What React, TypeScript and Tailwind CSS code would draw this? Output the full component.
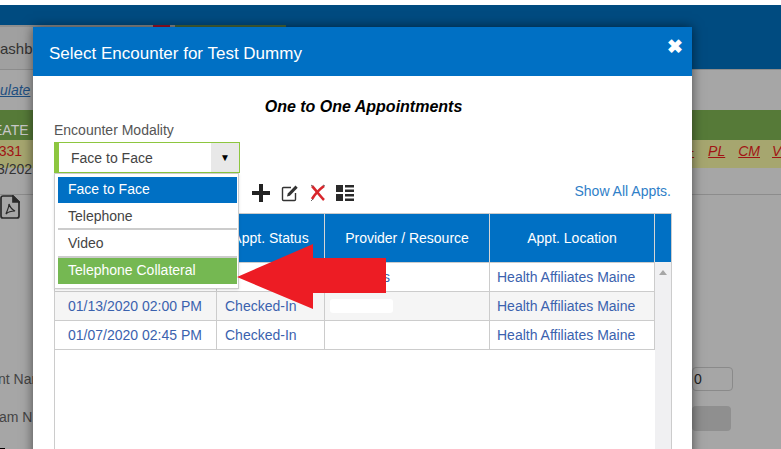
import React from "react";

const rows = [
  { date: "", status: "", provider: "s" },
  { date: "01/13/2020 02:00 PM", status: "Checked-In", provider: "" },
  { date: "01/07/2020 02:45 PM", status: "Checked-In", provider: "" },
];

const PlusIcon = () => (
  <svg width="18" height="18" viewBox="0 0 18 18">
    <path d="M7 0h4v7h7v4h-7v7H7v-7H0V7h7z" fill="#222" />
  </svg>
);

const EditIcon = () => (
  <svg width="18" height="18" viewBox="0 0 18 18" fill="none">
    <path d="M10 3.5H2.5a1 1 0 0 0-1 1v11a1 1 0 0 0 1 1h11a1 1 0 0 0 1-1V9" stroke="#333" strokeWidth="1.4" />
    <path d="M6 12.5l.8-3L14.5 1.6l2.2 2.2-7.8 7.9z" fill="#333" />
  </svg>
);

const CrossIcon = () => (
  <svg width="16" height="18" viewBox="0 0 16 18" fill="none">
    <path d="M2 2c3 3 7 9 12 14" stroke="#d8262c" strokeWidth="2.6" />
    <path d="M14 2C10 5 5 10 2 15" stroke="#d8262c" strokeWidth="2.6" />
    <path d="M1 1l2 1.5M13 1l2 1M1 17l2-2" stroke="#666" strokeWidth="1" />
  </svg>
);

const ListIcon = () => (
  <svg width="20" height="18" viewBox="0 0 20 18">
    <path d="M1 1h7v7H1zM1 10h7v7H1zM10 1h9v2.4h-9zM10 5.6h9V8h-9zM10 10h9v2.4h-9zM10 14.6h9V17h-9z" fill="#2a2a2a" />
  </svg>
);

const PdfIcon = () => (
  <svg width="20" height="24" viewBox="0 0 20 24" fill="none" stroke="#2a2a2a" strokeWidth="1.7">
    <path d="M3 1h10l6 6v14a2 2 0 0 1-2 2H3a2 2 0 0 1-2-2V3a2 2 0 0 1 2-2z" />
    <path d="M13 1l6 6h-6z" fill="#2a2a2a" />
    <path d="M9 9c1 3 2 5 6 7-3 0-7 1-9 3 1-3 3-6 3-10z" strokeWidth="1.2" />
  </svg>
);

export default function App() {
  return (
    <div className="relative h-[449px] w-[781px] overflow-hidden bg-white text-[14px] font-['Liberation_Sans',Arial,sans-serif]">
      {/* page behind the overlay */}
      <div className="mt-[5px] flex h-[444px] flex-col bg-[#a6a6a6]">
        <div className="h-[20px] bg-[#004b80]" />
        <div className="flex h-[2px] bg-[#004b80]">
          <div className="w-[153px] bg-[#8f8f8f]" />
          <div className="w-[17px] bg-[#a0122a]" />
          <div className="w-[5px] bg-[#8f8f8f]" />
          <div className="w-[111px] bg-[#4a6a3a]" />
        </div>
        <div className="flex h-[42px] bg-[#004b80]">
          <div className="flex w-[75px] items-center bg-[#a0a0a0] pt-[2px] text-[15px] text-[#333]">ashb</div>
        </div>
        <div className="flex h-[42px] items-center border-t border-[#8c8c8c] text-[#1f4f80] italic underline">
          <span className="-ml-[7px]">culate</span>
        </div>
        <div className="h-[30px] bg-[#567a38] pt-[12px] text-[14px] leading-[16px] text-[#c8c8c8]">
          <span className="-ml-[7px]">EATE</span>
        </div>
        <div className="flex h-[28px] items-start justify-between bg-[#a6a66f] text-[#a11414]">
          <span className="-ml-[9px] pt-[1px]">1331</span>
          <div className="flex pt-[1px] italic">
            <span className="mr-[14px] not-italic underline">+</span>
            <span className="mr-[13px] underline">PL</span>
            <span className="mr-[12px] underline">CM</span>
            <span className="w-[9px] overflow-hidden underline">V</span>
          </div>
        </div>
        <div className="h-[27px] border-b border-[#8c8c8c] text-[#333]">
          <span className="-ml-[3px] block -translate-y-[9px]">3/202</span>
        </div>
        <div>
          <PdfIcon />
        </div>
        <div className="mt-[148px] flex h-[24px] items-center justify-between pr-[48px] text-[#444]">
          <span className="-ml-[2px]">nt Nam</span>
          <span className="flex h-[24px] w-[41px] items-center rounded-[4px] border border-[#8a8a8a] pl-[1px] text-[#222]">0</span>
        </div>
        <div className="mt-[15px] flex h-[25px] items-center justify-between pr-[50px] text-[#444]">
          <span className="-ml-[1px] -translate-y-px">am N</span>
          <span className="h-[25px] w-[39px] rounded-[4px] bg-[#8f8f8f]" />
        </div>
        <div className="mt-[17px] h-px w-[5px] shrink-0 bg-black" />
      </div>

      {/* modal */}
      <div className="absolute top-[27px] left-[33px] h-[440px] w-[659px] bg-white shadow-[0_0_11px_rgba(0,0,0,0.55)]">
        <div className="flex h-[49px] items-start justify-between bg-[#0070c4] pl-[16px] pr-[9px] text-white">
          <span className="pt-[17px] text-[17px] leading-[20px]">Select Encounter for Test Dummy</span>
          <span className="pt-[10px] text-[19px] font-bold leading-[20px]">✖</span>
        </div>

        <div className="px-[21px]">
          <h2 className="pt-[22px] pl-[2px] text-center text-[16px] leading-[18px] font-bold italic text-black">One to One Appointments</h2>

          <div className="mt-[6px] text-[14px] leading-[16px] text-[#555]">Encounter Modality</div>
          <div className="mt-[4px] flex h-[31px] w-[186px] border border-l-[5px] border-[#8dc63f] text-[#444]">
            <span className="flex-1 pl-[12px] leading-[31px]">Face to Face</span>
            <span className="flex w-[28px] items-center justify-center bg-[#e8e8e8] text-[10px] text-black">▼</span>
          </div>

          <div className="mt-[11px] flex h-[18px] items-center justify-between pl-[198px]">
            <div className="flex items-center">
              <PlusIcon />
              <span className="ml-[11px]"><EditIcon /></span>
              <span className="ml-[11px]"><CrossIcon /></span>
              <span className="ml-[9px]"><ListIcon /></span>
            </div>
            <a className="mb-[4px] text-[14px] text-[#2f80c8]">Show All Appts.</a>
          </div>

          <div className="mt-[11px] flex h-[300px] w-[618px] border border-[#ccc] border-b-0">
            <div className="w-[600px]">
              <div className="grid h-[48px] grid-cols-[162px_108px_165px_165px] bg-[#0070c4] text-white">
                <div className="border-r border-[#d5d5d5]" />
                <div className="flex items-center justify-center border-r border-[#d5d5d5]">Appt. Status</div>
                <div className="flex items-center justify-center border-r border-[#d5d5d5]">Provider / Resource</div>
                <div className="flex items-center justify-center border-r border-[#d5d5d5]">Appt. Location</div>
              </div>
              {rows.map((row, i) => (
                <div
                  key={i}
                  className={`grid grid-cols-[162px_108px_165px_165px] border-t border-[#ccc] leading-[28px] text-[#3b62ae] ${i === 1 ? "bg-[#f5f5f5]" : "bg-white"} ${i === 2 ? "h-[30px] border-b" : "h-[29px]"}`}
                >
                  <div className="border-r border-[#ccc] pl-[13px]">{row.date}</div>
                  <div className="border-r border-[#ccc] pl-[8px]">{row.status}</div>
                  <div className="flex items-center border-r border-[#ccc] pl-[58px]">
                    {row.provider}
                    {i === 1 && <span className="-ml-[53px] h-[14px] w-[63px] rounded-[3px] bg-white" />}
                  </div>
                  <div className="border-r border-[#ccc] pl-[7px]">Health Affiliates Maine</div>
                </div>
              ))}
            </div>
            <div className="flex-1 bg-[#f0f0f2]">
              <div className="h-[48px] bg-[#0070c4]" />
              <div className="flex justify-center pt-[8px]">
                <span className="h-0 w-0 border-x-[4px] border-b-[5px] border-x-transparent border-b-[#a6a6a6]" />
              </div>
            </div>
          </div>
        </div>

        {/* open dropdown */}
        <div className="absolute top-[146px] left-[21px] w-[185px] border border-[#ccc] bg-white pl-[3px] pr-px pt-[3px] pb-[4px] text-[14px] shadow-sm">
          <div className="h-[26px] bg-[#0070c4] pl-[10px] leading-[25px] text-white">Face to Face</div>
          <div className="h-[27px] border-b-2 border-[#ccc] pl-[10px] leading-[26px] text-[#444]">Telephone</div>
          <div className="h-[28px] border-b-2 border-[#ccc] pl-[10px] leading-[26px] text-[#444]">Video</div>
          <div className="h-[26px] bg-[#75b852] pl-[10px] leading-[25px] text-white">Telephone Collateral</div>
        </div>

        {/* annotation arrow */}
        <svg className="absolute top-[217px] left-[204px]" width="154" height="66" viewBox="0 0 154 66">
          <polygon points="0,33 76,0 76,14 149,14 149,49 76,49 76,65" fill="#ed1c24" />
        </svg>
      </div>
    </div>
  );
}
